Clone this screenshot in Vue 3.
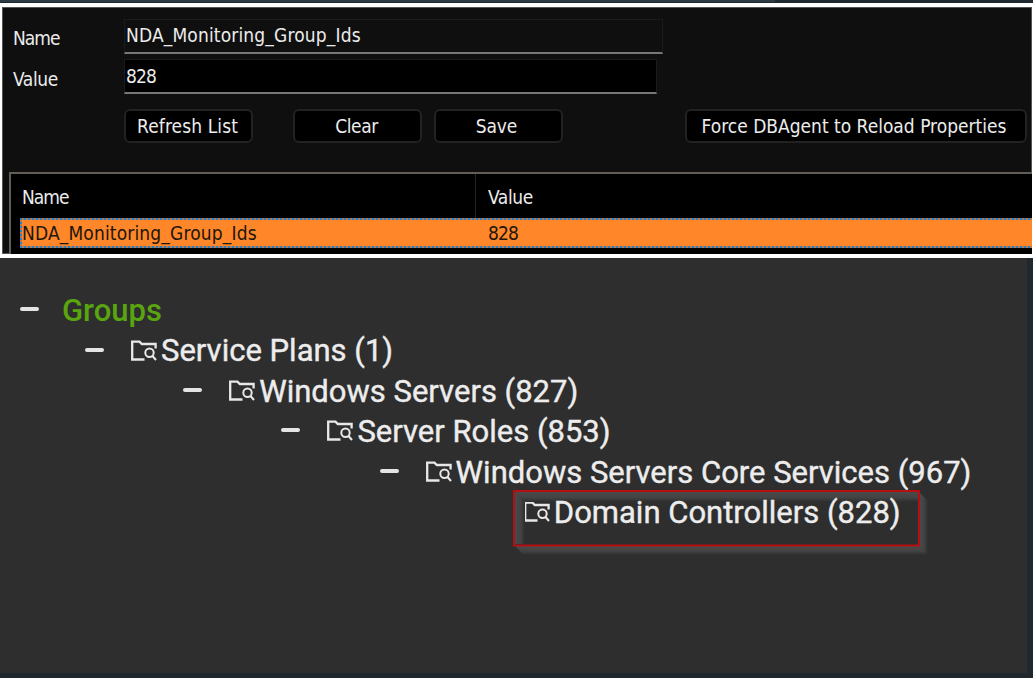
<script setup>
const actions = [
  { label: 'Refresh List', cls: 'refresh' },
  { label: 'Clear', cls: 'clear' },
  { label: 'Save', cls: 'save' },
  { label: 'Force DBAgent to Reload Properties', cls: 'force' },
]
const nodes = [
  { label: 'Service Plans (1)', open: true },
  { label: 'Windows Servers (827)', open: true },
  { label: 'Server Roles (853)', open: true },
  { label: 'Windows Servers Core Services (967)', open: true },
  { label: 'Domain Controllers (828)', open: false, marked: true },
]
</script>

<template>
  <div class="page">
    <div class="strip"><i></i></div>
    <section class="panel">
      <div class="field">
        <label class="t-name">Name</label>
        <div class="input name"><span class="ids">NDA_Monitoring_Group_Ids</span></div>
      </div>
      <div class="field second">
        <label class="t-value">Value</label>
        <div class="input value"><span class="num">828</span></div>
      </div>
      <div class="actions">
        <button v-for="a in actions" :key="a.label" :class="a.cls"><span>{{ a.label }}</span></button>
      </div>
      <div class="table">
        <div class="head"><div class="c1"><span class="t-name">Name</span></div><div class="c2"><span class="t-value">Value</span></div></div>
        <div class="row">
          <div class="c1"><span class="ids">NDA_Monitoring_Group_Ids</span></div><div class="c2"><span class="num">828</span></div>
        </div>
      </div>
    </section>
    <section class="tree">
      <div class="node root"><b class="dash"></b><span class="label">Groups</span></div>
      <div v-for="(n, i) in nodes" :key="n.label" class="node" :style="{ paddingLeft: 85 + i * 98.2 + 'px' }">
        <svg v-if="n.marked" class="mark" width="420" height="70" viewBox="0 0 420 70">
          <defs>
            <linearGradient id="v" x2="0" y2="1"><stop stop-color="#4a4a4a" /><stop offset=".55" stop-color="#434343" /><stop offset="1" stop-color="#2e2e2e" /></linearGradient>
            <linearGradient id="h"><stop stop-color="#4a4a4a" /><stop offset=".55" stop-color="#434343" /><stop offset="1" stop-color="#2e2e2e" /></linearGradient>
          </defs>
          <path d="M2 2H405V12H12Z" fill="url(#v)" />
          <path d="M2 2L12 12V54H2Z" fill="url(#h)" />
          <path d="M2 56H406L415 65H11Z" fill="url(#v)" />
          <path d="M406 2L415 11V65L406 56Z" fill="url(#h)" />
          <rect x="1" y="1" width="405" height="54.5" fill="none" stroke="#b50f12" stroke-width="2" />
        </svg>
        <b class="dash" :class="{ hidden: !n.open }"></b>
        <svg class="folder" width="26" height="22" viewBox="0 0 26 22" fill="none" stroke="#e8e8e8">
          <path d="M13.5 19.5H1.2V1.6H8.5L10.8 4H24.6V8.5" stroke-width="2.3" />
          <circle cx="18.5" cy="12.8" r="4.2" stroke-width="2" />
          <path d="M21.3 15.8L25 20" stroke-width="2.1" />
        </svg>
        <span class="label">{{ n.label }}</span>
      </div>
    </section>
  </div>
</template>

<style>
body { margin: 0; background: #20272d; }
</style>
<style scoped>
* { box-sizing: border-box; }
.page { width: 1033px; height: 678px; overflow: hidden; background: #20272d; display: flex; flex-direction: column; }
.strip { height: 3px; flex: none; background: #202930; }
.strip i { display: block; width: 775px; height: 2px; background: #2d3b45; }
.panel {
  height: 255px; flex: none; background: #0f0f0f; border: solid #fff; border-width: 4px 1px 4px 2px;
  box-shadow: inset 1px 1px #555, inset -1px -1px #555; overflow: hidden;
  font: 19px/24px "DejaVu Sans Condensed", "DejaVu Sans", sans-serif; font-stretch: condensed; color: #ececec;
  white-space: nowrap;
}
.field { display: flex; height: 36px; margin-top: 12px; padding-left: 11px; }
.field.second { margin-top: 4px; }
label { width: 111px; flex: none; padding-top: 8px; }
.field:not(.second) label { padding-top: 7px; }
.t-name { letter-spacing: -1px; }
.t-value { letter-spacing: -0.4px; }
.num { letter-spacing: -0.9px; }
.ids { letter-spacing: 0.15px; }
.input { width: 539px; height: 35px; background: #0f0f0f; border: 1px solid #1b1b1b; border-bottom: 2px solid #777; padding: 3px 1px 0; }
.input.value { width: 533px; background: #000; padding-top: 4px; }
.actions { display: flex; height: 34px; margin: 14px 0 0 122px; }
button { flex: none; width: 129px; height: 34px; padding: 0 2px 0 0; border: 2px solid #222; border-radius: 6px; background: #000; color: #ececec; font: inherit; font-stretch: condensed; }
.refresh { letter-spacing: 0.1px; }
.clear { margin-left: 40px; letter-spacing: -0.4px; }
.save { margin-left: 12px; padding-right: 4px; letter-spacing: -0.1px; }
.force { margin-left: 122px; width: 342px; padding-right: 4px; }
.table { margin: 29px 0 0 7px; height: 90px; border: solid #625d57; border-width: 2px 0 0 2px; background: #000; }
.head { display: flex; height: 44px; padding-left: 11px; }
.head div { padding-top: 11px; }
.c1 { width: 454px; flex: none; }
.head .c1 { border-right: 1px solid #242424; }
.c2 { padding-left: 12px; }
.row {
  display: flex; height: 30px; margin-left: 9px; padding-left: 2px; color: #21160a;
  background:
    repeating-linear-gradient(90deg, #2783c6 0 2px, #b97a52 2px 4px) 0 0 / 100% 2px no-repeat,
    repeating-linear-gradient(90deg, #2783c6 0 2px, #b97a52 2px 4px) 0 100% / 100% 2px no-repeat,
    repeating-linear-gradient(180deg, #2783c6 0 2px, #b97a52 2px 4px) 0 0 / 2px 100% no-repeat,
    #ff8629;
}
.row div { padding-top: 3px; }
.tree { width: 1027px; height: 415px; flex: none; background: #2e2e2e; padding-top: 32px; font: 400 31px/40.4px Roboto, sans-serif; color: #ededed; }
.node { position: relative; display: flex; align-items: center; height: 40.4px; white-space: nowrap; font-size: 31px; }
.root { padding-left: 20px; color: #59a50f; font-weight: 500; }
.dash { width: 19px; height: 4px; flex: none; border-radius: 2px; background: #e4e4e4; margin-right: 27px; position: relative; top: -1px; }
.root .dash { margin-right: 23px; }
.hidden { visibility: hidden; }
.folder { flex: none; margin-right: 4px; }
.mark { position: absolute; left: 513px; top: -2px; }
.label { position: relative; padding-top: 2px; }
.node:not(.root) .label { -webkit-text-stroke: 0.4px #ededed; }
</style>
